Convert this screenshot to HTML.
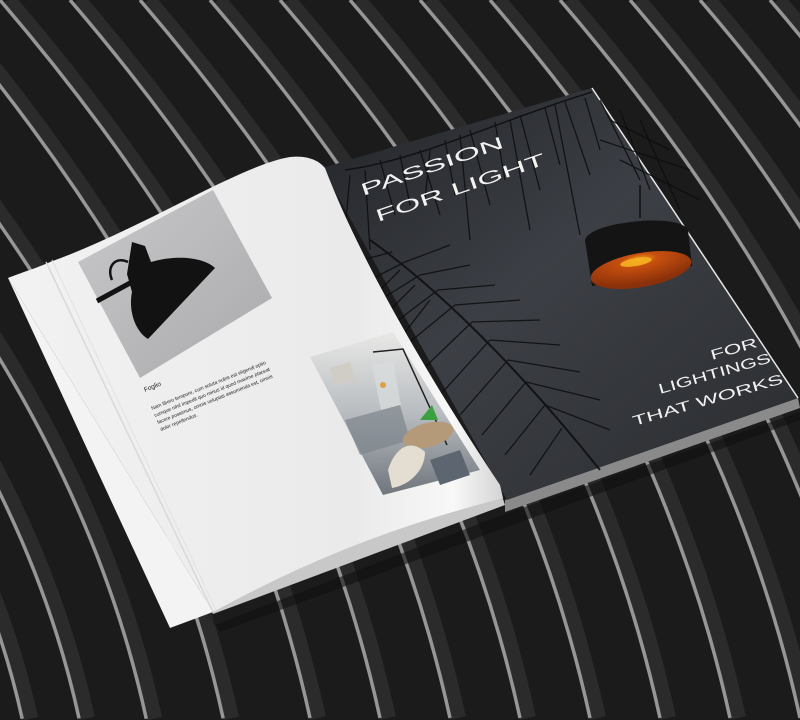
<!DOCTYPE html>
<html><head><meta charset="utf-8"><style>
html,body{margin:0;padding:0;background:#1b1b1b;width:800px;height:720px;overflow:hidden;}
svg{display:block}
text{font-family:"Liberation Sans",sans-serif;}
</style></head><body>
<svg width="800" height="720" viewBox="0 0 800 720" xmlns="http://www.w3.org/2000/svg" overflow="hidden">
<defs>
<linearGradient id="cover" x1="0" y1="0" x2="1" y2="1">
<stop offset="0" stop-color="#222428"/><stop offset="0.45" stop-color="#3c3f45"/><stop offset="1" stop-color="#2a2c2f"/>
</linearGradient>
<linearGradient id="lp" x1="0" y1="0" x2="1" y2="0">
<stop offset="0" stop-color="#f2f2f2"/><stop offset="0.7" stop-color="#eaeaea"/><stop offset="0.9" stop-color="#f8f8f8"/><stop offset="1" stop-color="#d4d4d4"/>
</linearGradient>
<linearGradient id="lampimg" x1="0" y1="0" x2="1" y2="1">
<stop offset="0" stop-color="#c8c8ca"/><stop offset="1" stop-color="#aaaaac"/>
</linearGradient>
<linearGradient id="photo" x1="0" y1="0" x2="0" y2="1">
<stop offset="0" stop-color="#e8e8e6"/><stop offset="0.5" stop-color="#b8bcc0"/><stop offset="1" stop-color="#6f767c"/>
</linearGradient>
<radialGradient id="orange" cx="0.5" cy="0.2" r="0.7">
<stop offset="0" stop-color="#f5a820"/><stop offset="0.25" stop-color="#c8500f"/><stop offset="1" stop-color="#8a300a"/>
</radialGradient>
<path id="st" d="M0 0 Q300 350 380 718" vector-effect="non-scaling-stroke"/>
<g id="all">
<use href="#st" x="-70"/><use href="#st" x="0"/><use href="#st" x="70"/><use href="#st" x="140"/><use href="#st" x="210"/><use href="#st" x="280"/><use href="#st" x="350"/><use href="#st" x="420"/><use href="#st" x="490"/><use href="#st" x="560"/><use href="#st" x="630"/><use href="#st" x="700"/><use href="#st" x="770"/>
<use href="#st" transform="translate(-120,70) scale(0.903)"/>
<use href="#st" transform="translate(-160,140) scale(0.806)"/>
<use href="#st" transform="translate(-190,210) scale(0.708)"/>
<use href="#st" transform="translate(-210,280) scale(0.611)"/>
<use href="#st" transform="translate(-220,350) scale(0.514)"/>
<use href="#st" transform="translate(-220,420) scale(0.417)"/>
<use href="#st" transform="translate(-210,490) scale(0.319)"/>
<use href="#st" transform="translate(-190,560) scale(0.222)"/>
</g>
<clipPath id="cl"><rect width="800" height="720"/></clipPath>
</defs>
<g clip-path="url(#cl)">
<rect width="800" height="720" fill="#1b1b1b"/>
<g fill="none">
<g stroke="#2b2b2b" stroke-width="16" transform="translate(8,0)"><use href="#all"/></g>
<g stroke="#969696" stroke-width="3.5"><use href="#all"/></g>
</g>
<path d="M12 290 L215 625 L510 512 L800 412 L800 420 L220 632 Z" fill="#111" opacity="0.6"/>
<path d="M505 500 L798 398 L800 408 L505 512 Z" fill="#8a8a8a"/>
<path d="M322 168 L592 88 L798 398 L507 500 Z" fill="url(#cover)"/>
<path d="M592 88 L798 398" stroke="#e8e8e8" stroke-width="1.5"/>
<g stroke="#0d0d0f" stroke-width="1.3" fill="none" opacity="0.85">
<path d="M370 240 C440 290 520 370 600 470" stroke-width="2"/>
<path d="M392 252 L355 262 M405 262 L360 285 M420 275 L372 305 M438 290 L385 330 M455 305 L400 350 M472 322 L420 372 M490 340 L440 395 M508 360 L460 415 M526 382 L482 435 M545 405 L505 455 M562 428 L530 475"/>
<path d="M405 262 L450 245 M420 275 L470 265 M438 290 L495 285 M455 305 L520 300 M472 322 L540 320 M490 340 L560 345 M508 360 L580 372 M526 382 L600 400 M545 405 L610 430"/>
<path d="M400 270 L370 300 M415 285 L380 320 M430 300 L395 345"/>
<path d="M345 170 C420 160 500 120 592 92" stroke-width="1.5"/>
<path d="M380 160 L395 215 M400 155 L410 205 M420 150 L440 215 M445 140 L455 195 M470 130 L490 205 M495 122 L505 180 M520 115 L540 190 M545 108 L560 165 M565 102 L590 175 M585 98 L600 150"/>
<path d="M430 150 L425 200 M460 135 L470 240 M510 120 L530 230 M555 105 L580 235 M600 100 L640 180 M610 120 L670 150 M600 140 L690 170 M620 160 L700 200"/>
<path d="M620 110 L650 190 M640 120 L680 210 M350 175 L345 230 M365 170 L370 250"/>
</g>
<path d="M640 185 L640 218" stroke="#0e0e0e" stroke-width="1.5"/>
<path d="M585 240 C588 222 680 212 688 230 L692 266 L592 286 Z" fill="#141414"/>
<ellipse cx="641" cy="270" rx="51" ry="17" transform="rotate(-10 641 270)" fill="url(#orange)"/>
<ellipse cx="636" cy="262" rx="16" ry="4" transform="rotate(-10 636 262)" fill="#f6b020" opacity="0.9"/>
<text transform="translate(363,196) rotate(-19)" fill="#f2f2f2" font-size="17" textLength="150" lengthAdjust="spacingAndGlyphs">PASSION</text>
<text transform="translate(378,222) rotate(-19)" fill="#f2f2f2" font-size="17" textLength="178" lengthAdjust="spacingAndGlyphs">FOR  LIGHT</text>
<g fill="#f0f0f0" font-size="14">
<text transform="translate(712,360) rotate(-16)" textLength="48" lengthAdjust="spacingAndGlyphs">FOR</text>
<text transform="translate(660,394) rotate(-16)" textLength="116" lengthAdjust="spacingAndGlyphs">LIGHTINGS</text>
<text transform="translate(634,426) rotate(-16)" textLength="156" lengthAdjust="spacingAndGlyphs">THAT WORKS</text>
</g>
<path d="M205 600 L500 490 L505 505 L213 614 Z" fill="#c8c8c8"/>
<path d="M8 278 C20 273 40 267 50 262 C140 230 240 165 290 157 C310 155 320 162 325 168 C360 260 430 380 500 485 L503 498 C420 520 330 548 213 612 Z" fill="url(#lp)"/>
<path d="M8 278 L170 628 L213 612" fill="#f3f3f3"/>
<path d="M46 262 L213 612" stroke="#d9d9d9" stroke-width="1.5"/>
<path d="M52 260 L216 610" stroke="#e2e2e2" stroke-width="1"/>
<path d="M78 262 L213 190 L272 298 L140 378 Z" fill="url(#lampimg)"/>
<path d="M132 242 L145 246 L151 262 C178 254 205 258 215 268 L148 339 C136 332 128 312 132 292 L127 274 Z" fill="#121212"/>
<path d="M97 301 L130 283" stroke="#121212" stroke-width="5"/>
<path d="M112 280 C106 266 116 256 128 262" stroke="#121212" stroke-width="2.5" fill="none"/>
<path d="M310 357 L393 332 L480 470 L383 495 Z" fill="url(#photo)"/>
<path d="M330 368 L350 362 L355 380 L335 386 Z" fill="#d0ccc6"/>
<path d="M373 352 L403 349 L447 445" stroke="#222" stroke-width="1.5" fill="none"/>
<path d="M372 365 L393 361 L401 405 L381 410 Z" fill="#d8dcdc" opacity="0.75"/>
<circle cx="383" cy="385" r="3" fill="#e0a040"/>
<path d="M345 420 L400 405 L410 440 L360 455 Z" fill="#7d858c" opacity="0.7"/>
<ellipse cx="428" cy="435" rx="26" ry="12" transform="rotate(-15 428 435)" fill="#b49a78"/>
<path d="M420 420 L432 405 L438 420 Z" fill="#3aa040"/>
<path d="M388 470 C395 448 410 438 425 452 C425 470 410 485 392 488 Z" fill="#e4ddd2"/>
<path d="M430 460 L460 450 L470 475 L440 485 Z" fill="#5d6670"/>
<text transform="translate(145,392) rotate(-22)" font-size="6.5" fill="#222">Foglio</text>
<g font-size="5" fill="#222">
<text transform="translate(152,410) rotate(-22)">Nam libero tempore, cum soluta nobis est eligendi optio</text>
<text transform="translate(155,417) rotate(-22)">cumque nihil impedit quo minus id quod maxime placeat</text>
<text transform="translate(158,424) rotate(-22)">facere possimus, omnis voluptas assumenda est, omnis</text>
<text transform="translate(161,431) rotate(-22)">dolor repellendus.</text>
</g>
</g>
</svg>
</body></html>
